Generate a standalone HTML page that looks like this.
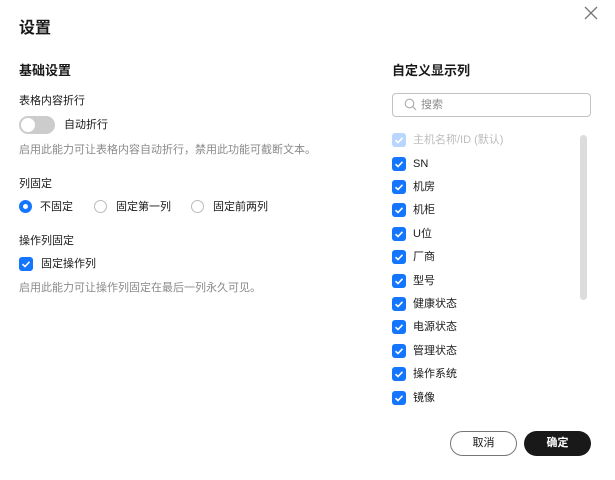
<!DOCTYPE html><html><head><meta charset="utf-8"><style>
body{margin:0;width:615px;height:480px;background:#fff;font-family:"Liberation Sans","Noto Sans CJK SC",sans-serif;color:#191919;position:relative;overflow:hidden}
.a{position:absolute;white-space:nowrap}
.t12{font-size:11px;line-height:14px}
.g{color:#8a8a8a}
.cb{position:absolute;width:14px;height:14px;border-radius:3px;background:#1476ff}
.cb svg{position:absolute;left:0;top:0}
.rd{position:absolute;width:13px;height:13px;border-radius:50%;border:1px solid #bbb;box-sizing:border-box}
</style></head><body>
<div class="a" style="left:19px;top:18px;font-size:16px;font-weight:bold;line-height:22px">设置</div>
<svg class="a" style="left:584px;top:6px" width="14" height="14"><path d="M1 1L13 13M13 1L1 13" stroke="#777" stroke-width="1.3"/></svg>
<div class="a" style="left:19px;top:62px;font-size:13px;font-weight:bold;line-height:17px">基础设置</div>
<div class="a t12" style="left:19px;top:94px">表格内容折行</div>
<div class="a" style="left:19px;top:116px;width:36px;height:18px;border-radius:9px;background:#ccc"></div>
<div class="a" style="left:21px;top:118px;width:14px;height:14px;border-radius:50%;background:#fff"></div>
<div class="a t12" style="left:64px;top:118px">自动折行</div>
<div class="a t12 g" style="left:19px;top:143px">启用此能力可让表格内容自动折行，禁用此功能可截断文本。</div>
<div class="a t12" style="left:19px;top:177px">列固定</div>
<div class="rd" style="left:19px;top:200px;border:4px solid #1476ff"></div>
<div class="a t12" style="left:40px;top:200px">不固定</div>
<div class="rd" style="left:94px;top:200px"></div>
<div class="a t12" style="left:116px;top:200px">固定第一列</div>
<div class="rd" style="left:191px;top:200px"></div>
<div class="a t12" style="left:213px;top:200px">固定前两列</div>
<div class="a t12" style="left:19px;top:234px">操作列固定</div>
<div class="cb" style="left:19px;top:257px"><svg width="14" height="14"><path d="M3.5 7.2L6 9.5L10.5 4.8" stroke="#fff" stroke-width="1.6" fill="none"/></svg></div>
<div class="a t12" style="left:41px;top:257px">固定操作列</div>
<div class="a t12 g" style="left:19px;top:281px">启用此能力可让操作列固定在最后一列永久可见。</div>
<div class="a" style="left:392px;top:62px;font-size:13px;font-weight:bold;line-height:17px">自定义显示列</div>
<div class="a" style="left:392px;top:93px;width:199px;height:24px;border:1px solid #c2c2c2;border-radius:4px;box-sizing:border-box"></div>
<svg class="a" style="left:404px;top:98px" width="13" height="13"><circle cx="5.5" cy="5.5" r="4.3" stroke="#aaa" fill="none" stroke-width="1.1"/><path d="M8.7 8.7L12 12" stroke="#aaa" stroke-width="1.1"/></svg>
<div class="a t12 g" style="left:421px;top:98px">搜索</div>
<div class="a" style="left:580px;top:135px;width:7px;height:165px;border-radius:4px;background:#dcdcdc"></div>
<div class="cb" style="left:392px;top:133px;background:#b9d6ff"><svg width="14" height="14"><path d="M3.5 7.2L6 9.5L10.5 4.8" stroke="#fff" stroke-width="1.6" fill="none"/></svg></div>
<div class="a t12" style="left:413px;top:133px;color:#bdbdbd">主机名称/ID (默认)</div>
<div id="list"></div>
<script>
var it=["SN","机房","机柜","U位","厂商","型号","健康状态","电源状态","管理状态","操作系统","镜像"],h="";
it.forEach(function(s,i){var y=Math.round(156.5+i*23.4);h+='<div class="cb" style="left:392px;top:'+y+'px"><svg width="14" height="14"><path d="M3.5 7.2L6 9.5L10.5 4.8" stroke="#fff" stroke-width="1.6" fill="none"/></svg></div><div class="a t12" style="left:413px;top:'+y+'px">'+s+'</div>'});
document.getElementById("list").innerHTML=h;
</script>
<div class="a t12" style="left:450px;top:431px;width:67px;height:25px;border:1px solid #777;border-radius:13px;box-sizing:border-box;text-align:center;line-height:23px">取消</div>
<div class="a t12" style="left:524px;top:431px;width:67px;height:25px;background:#191919;color:#fff;border-radius:13px;text-align:center;line-height:25px;font-weight:bold">确定</div>
</body></html>
